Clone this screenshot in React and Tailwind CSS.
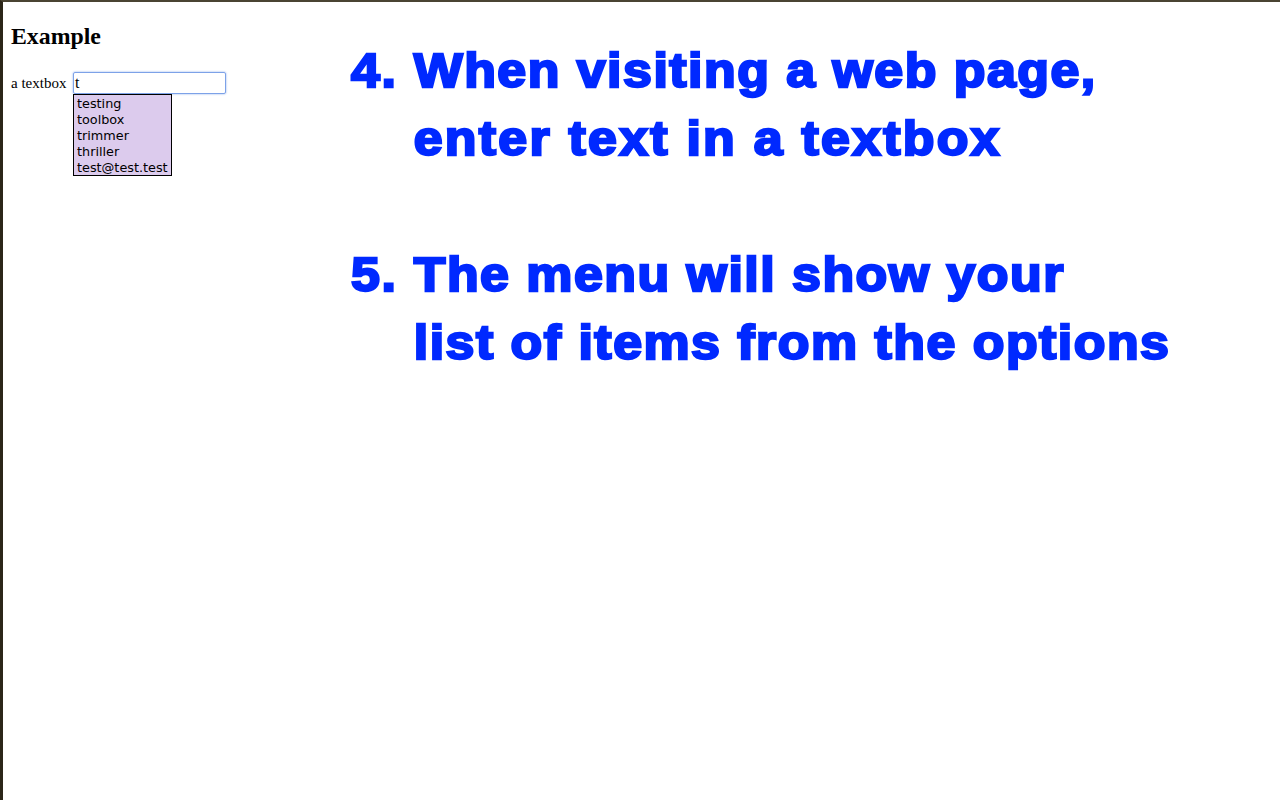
const menuItems = ["testing", "toolbox", "trimmer", "thriller", "test@test.test"];

const steps = [
  { num: "4.", lines: [["When visiting a web page,", "tracking-[1.4px]"], ["enter text in a textbox", "tracking-[2.1px]"]] },
  { num: "5.", lines: [["The menu will show your", "tracking-[1.4px]"], ["list of items from the options", "tracking-[1.4px]"]] },
];

export default function App() {
  return (
    <div className="h-[800px] w-[1280px] overflow-hidden bg-white border-l-[3px] border-t-2 border-l-[#2b2618] border-t-[#4a4433] flex">
      {/* example form */}
      <div className="w-[347px] shrink-0 pl-[8px] pt-[21px] font-['Liberation_Serif',serif] text-black">
        <h2 className="text-[23.8px] leading-[27px] font-bold">Example</h2>
        <div className="mt-[22px] flex items-start">
          <span className="w-[62px] text-[15px] leading-[22px] h-[22px]">a textbox</span>
          <div>
            <div className="w-[153px] h-[22px] border border-[#7da2e8] rounded-[2px] shadow-[0_0_2px_#7da2e8] pl-[1px] text-[16px] leading-[20px]">t</div>
            <ul className="w-[99px] h-[82px] pt-px border border-black bg-[#dccbed] pl-[3px] font-['DejaVu_Sans',sans-serif] text-[12.8px] leading-[16px]">
              {menuItems.map((item) => (
                <li key={item}>{item}</li>
              ))}
            </ul>
          </div>
        </div>
      </div>

      {/* instructions */}
      <div className="origin-left scale-x-[1.08] pt-[35px] font-['Liberation_Sans',sans-serif] font-bold text-[#0029ff] text-[48px] leading-[68px] tracking-[1.4px] [-webkit-text-stroke:2.4px_#0029ff]">
        {steps.map((step) => (
          <div key={step.num} className="mb-[68px] flex">
            <div className="w-[59px] shrink-0 pl-px">{step.num}</div>
            <div>
              {step.lines.map(([line, spacing]) => (
                <div key={line} className={`whitespace-nowrap ${spacing}`}>{line}</div>
              ))}
            </div>
          </div>
        ))}
      </div>
    </div>
  );
}
